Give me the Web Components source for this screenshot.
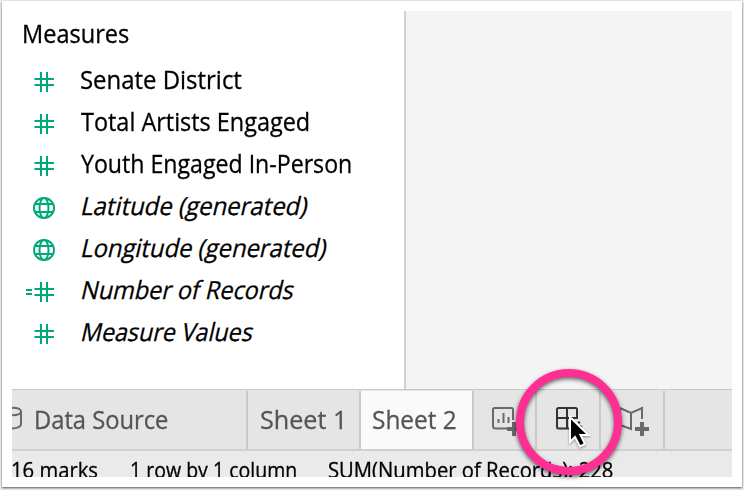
<!DOCTYPE html>
<html lang="en"><head><meta charset="utf-8"><title>Measures</title>
<style>html,body{margin:0;width:744px;height:490px;overflow:hidden;background:#eee}</style></head>
<body><work-book></work-book>
<script>
const measure = document.createElement('canvas').getContext('2d');

// Text whose ink fills a given width; the weight and size come from the host.
class FitText extends HTMLElement {
  connectedCallback() {
    const w = +this.getAttribute('w'), size = +this.getAttribute('size') || 25;
    const slant = this.hasAttribute('slant');
    measure.font = size + 'px "Open Sans"';
    const m = measure.measureText(this.textContent);
    const left = -m.actualBoundingBoxLeft;
    const ink = m.actualBoundingBoxRight + m.actualBoundingBoxLeft;
    const s = (w - (slant ? 2 : 0)) / ink;
    this.attachShadow({mode: 'open'}).innerHTML = `<style>
      :host{display:block;flex:none;width:${w}px;height:30px;white-space:nowrap;font:${size}px/30px "Open Sans",sans-serif;-webkit-text-stroke:.3px currentColor}
      span{display:inline-block;transform-origin:0 24px;margin-left:${left * -s + (slant ? 1 : 0)}px;transform:${slant ? 'skewX(-13deg)' : ''} scaleX(${s})}
      </style><span><slot></slot></span>`;
  }
}
customElements.define('fit-text', FitText);

const glyphs = {
  hash: '<path d="M14 6v20M20 6v20M7.500 13h19.500M7.500 19h19.500"/>',
  calc: '<path d="M14 6v20M20 6v20M7.500 13h19.500M7.500 19h19.500M-1 14h6M-1 18h6"/>',
  globe: '<circle cx="17" cy="16" r="10"/><ellipse cx="17" cy="16" rx="4.500" ry="10"/><path d="M8 12h18M8 20h18"/>'
};
class MeasureField extends HTMLElement {
  connectedCallback() {
    this.attachShadow({mode: 'open'}).innerHTML = `<style>
      :host{display:flex;align-items:center;height:42px;gap:20px}
      svg{flex:none;width:34px;height:32px;margin-top:2px;overflow:visible;fill:none;stroke:#00a87a;stroke-width:2}
      ::slotted(fit-text){margin-top:-5px}
      </style><svg viewBox="0 0 34 32">${glyphs[this.getAttribute('icon')]}</svg><slot></slot>`;
  }
}
customElements.define('measure-field', MeasureField);

class SheetTab extends HTMLElement {
  connectedCallback() {
    this.attachShadow({mode: 'open'}).innerHTML = `<style>
      :host{display:flex;box-sizing:border-box;flex:none;height:58px;border-right:2px solid #c9c9c9;color:#555;padding-top:14px}
      :host([active]){background:#fafafa}
      ::slotted(fit-text){margin-top:-1px}
      ::slotted(svg){display:block;overflow:visible;fill:none;stroke:#696969;stroke-width:2}
      </style><slot></slot>`;
  }
}
customElements.define('sheet-tab', SheetTab);

class WorkBook extends HTMLElement {
  connectedCallback() {
    this.attachShadow({mode: 'open'}).innerHTML = `<style>
      :host{display:block;box-sizing:border-box;width:744px;height:490px;padding:1px 2px 3px;position:relative;overflow:hidden;background:#eee}
      .card{box-sizing:border-box;height:486px;background:#fff;padding:10px;box-shadow:0 1px 2px #555}
      .app{width:720px;height:466px;overflow:hidden;display:flex;flex-direction:column}
      .top{display:flex;height:378px;flex:none}
      .list{box-sizing:border-box;width:392px;padding:7px 0 0 11px}
      .list>fit-text{margin:0 0 12px 1px}
      measure-field{margin-left:4px}
      .pane{flex:1;border-left:2px solid #d2d2d2;background:#f4f4f4}
      .tabs{display:flex;flex:none;box-sizing:border-box;height:62px;background:#e5e5e5;border-top:1px solid #c8c8c8;border-bottom:2px solid #d0d0d0;padding-top:1px}
      .status{box-sizing:border-box;display:flex;height:26px;background:#eaeaea;color:#000;padding-top:4px}
      .ring{position:absolute;left:516px;top:369px;width:106px;height:106px;box-sizing:border-box;border:8px solid #ff2e93;border-radius:50%;filter:drop-shadow(0 2px 2px #0009)}
      .cursor{position:absolute;left:564px;top:410px;overflow:visible;filter:drop-shadow(0 1px 1px #0006)}
      </style>
      <div class="card"><div class="app">
        <div class="top"><div class="list">
          <fit-text w="104.500">Measures</fit-text>
          <measure-field icon="hash"><fit-text w="161">Senate District</fit-text></measure-field>
          <measure-field icon="hash"><fit-text w="228">Total Artists Engaged</fit-text></measure-field>
          <measure-field icon="hash"><fit-text w="270">Youth Engaged In-Person</fit-text></measure-field>
          <measure-field icon="globe"><fit-text slant w="226">Latitude (generated)</fit-text></measure-field>
          <measure-field icon="globe"><fit-text slant w="245">Longitude (generated)</fit-text></measure-field>
          <measure-field icon="calc"><fit-text slant w="212">Number of Records</fit-text></measure-field>
          <measure-field icon="hash"><fit-text slant w="171">Measure Values</fit-text></measure-field>
        </div><div class="pane"></div></div>
        <div class="tabs">
          <sheet-tab style="width:236px"><svg width="24" height="30"><path d="M-10 6.500C-10 1.500 9 1.500 9 6.500V19C9 25-10 25-10 19ZM-10 6.500C-10 11.500 9 11.500 9 6.500"/></svg><fit-text w="131.500">Data Source</fit-text></sheet-tab>
          <sheet-tab style="width:113px;padding-left:13px"><fit-text w="81">Sheet 1</fit-text></sheet-tab>
          <sheet-tab active style="width:113px;padding-left:12px"><fit-text w="82.500">Sheet 2</fit-text></sheet-tab>
          <sheet-tab style="width:63px;padding-left:18px"><svg width="32" height="32"><path d="M15 23.500H3.500Q1 23.500 1 21V4.500Q1 3 2.500 3H19.500Q21 3 21 4.500V15M6.500 18v-4M11.500 18V8M16.500 18v-6"/><path stroke-width="4" d="M15 24h14M22 17v14"/></svg></sheet-tab>
          <sheet-tab style="width:64px;padding-left:19px"><svg width="32" height="32" style="stroke:#333"><path d="M15 23.500H2.500Q1 23.500 1 22V4.500Q1 3 2.500 3H19.500Q21 3 21 4.500V13H1M11 3v20.500M22 17l2 1M23 21l3 1"/></svg></sheet-tab>
          <sheet-tab style="width:64px;padding-left:18px"><svg width="32" height="32"><path d="M1 3l11 5L23 3v11M1 3v17l11 4V8"/><path stroke-width="4" d="M16 24h14M23 17v14"/></svg></sheet-tab>
        </div>
        <div class="status">
          <fit-text size="21" w="86">16 marks</fit-text>
          <fit-text size="21" w="165.500" style="margin-left:33px">1 row by 1 column</fit-text>
          <fit-text size="21" w="283.500" style="margin-left:32.500px">SUM(Number of Records): 228</fit-text>
        </div>
      </div></div>
      <div class="ring"></div>
      <svg class="cursor" width="26" height="40"><path d="M6 7v25l5-5 5 9.500 5-2.500-4.500-9h8Z" fill="#000" stroke="#fff" stroke-width="2"/></svg>`;
  }
}
customElements.define('work-book', WorkBook);
</script></body></html>
